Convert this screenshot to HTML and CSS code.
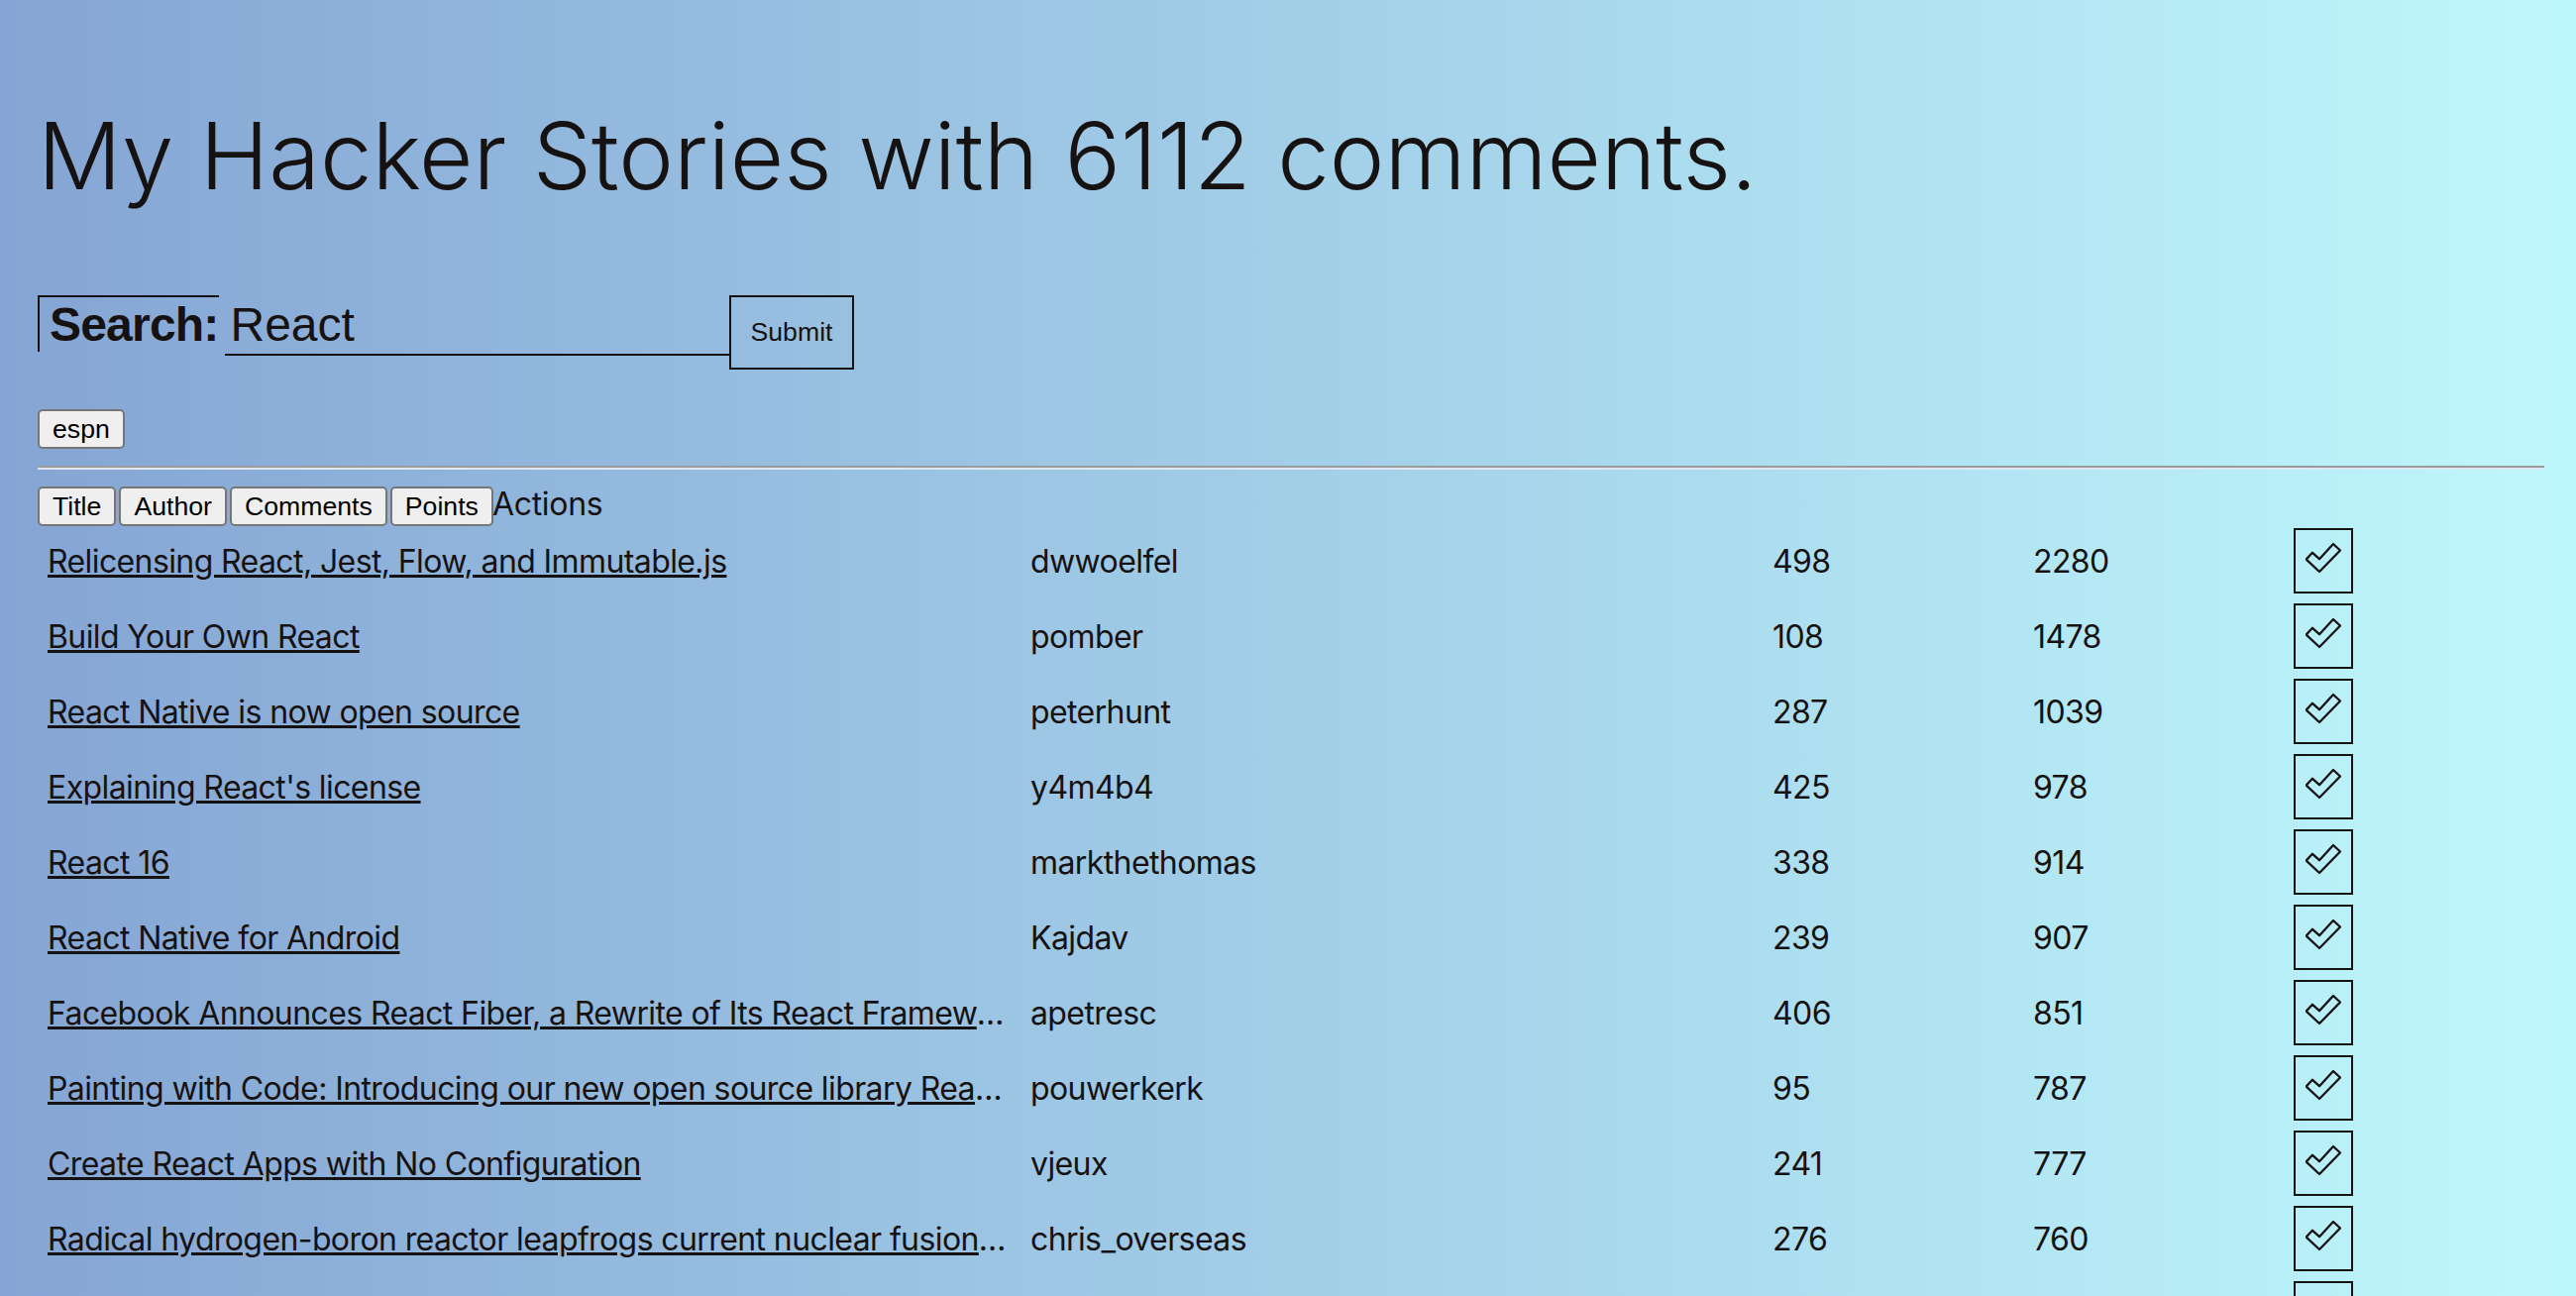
FILE: index.html
```html
<!DOCTYPE html>
<html lang="en">
<head>
<meta charset="utf-8">
<title>My Hacker Stories</title>
<link rel="stylesheet" href="styles.css">
</head>
<body>
<div class="container">
  <h1 class="headline-primary">My Hacker Stories with 6112 comments.</h1>

  <form class="search-form">
    <label class="label" for="search"><strong>Search:</strong></label>&nbsp;<input id="search" class="input" type="text" value="React"><button type="submit" class="button button-large">Submit</button>
  </form>

  <div class="last-searches">
    <button type="button" class="native-button">espn</button>
  </div>

  <hr class="divider">

  <div class="sort-header">
    <button type="button" class="native-button">Title</button>
    <button type="button" class="native-button">Author</button>
    <button type="button" class="native-button">Comments</button>
    <button type="button" class="native-button">Points</button>
    <span class="sort-label">Actions</span>
  </div>

  <ul class="list">
    <li class="item">
      <span class="col col-title"><a href="#">Relicensing React, Jest, Flow, and Immutable.js</a></span>
      <span class="col col-author">dwwoelfel</span>
      <span class="col col-num">498</span>
      <span class="col col-num">2280</span>
      <span class="col col-num"><button type="button" class="button button-small"><svg class="check" viewBox="0 0 36 36" width="36" height="36"><polygon points="0.7,19.5 7,12.8 14,19.2 28,4 35,10.5 14,32"/></svg></button></span>
    </li>
    <li class="item">
      <span class="col col-title"><a href="#">Build Your Own React</a></span>
      <span class="col col-author">pomber</span>
      <span class="col col-num">108</span>
      <span class="col col-num">1478</span>
      <span class="col col-num"><button type="button" class="button button-small"><svg class="check" viewBox="0 0 36 36" width="36" height="36"><polygon points="0.7,19.5 7,12.8 14,19.2 28,4 35,10.5 14,32"/></svg></button></span>
    </li>
    <li class="item">
      <span class="col col-title"><a href="#">React Native is now open source</a></span>
      <span class="col col-author">peterhunt</span>
      <span class="col col-num">287</span>
      <span class="col col-num">1039</span>
      <span class="col col-num"><button type="button" class="button button-small"><svg class="check" viewBox="0 0 36 36" width="36" height="36"><polygon points="0.7,19.5 7,12.8 14,19.2 28,4 35,10.5 14,32"/></svg></button></span>
    </li>
    <li class="item">
      <span class="col col-title"><a href="#">Explaining React's license</a></span>
      <span class="col col-author">y4m4b4</span>
      <span class="col col-num">425</span>
      <span class="col col-num">978</span>
      <span class="col col-num"><button type="button" class="button button-small"><svg class="check" viewBox="0 0 36 36" width="36" height="36"><polygon points="0.7,19.5 7,12.8 14,19.2 28,4 35,10.5 14,32"/></svg></button></span>
    </li>
    <li class="item">
      <span class="col col-title"><a href="#">React 16</a></span>
      <span class="col col-author">markthethomas</span>
      <span class="col col-num">338</span>
      <span class="col col-num">914</span>
      <span class="col col-num"><button type="button" class="button button-small"><svg class="check" viewBox="0 0 36 36" width="36" height="36"><polygon points="0.7,19.5 7,12.8 14,19.2 28,4 35,10.5 14,32"/></svg></button></span>
    </li>
    <li class="item">
      <span class="col col-title"><a href="#">React Native for Android</a></span>
      <span class="col col-author">Kajdav</span>
      <span class="col col-num">239</span>
      <span class="col col-num">907</span>
      <span class="col col-num"><button type="button" class="button button-small"><svg class="check" viewBox="0 0 36 36" width="36" height="36"><polygon points="0.7,19.5 7,12.8 14,19.2 28,4 35,10.5 14,32"/></svg></button></span>
    </li>
    <li class="item">
      <span class="col col-title"><a href="#">Facebook Announces React Fiber, a Rewrite of Its React Framework</a></span>
      <span class="col col-author">apetresc</span>
      <span class="col col-num">406</span>
      <span class="col col-num">851</span>
      <span class="col col-num"><button type="button" class="button button-small"><svg class="check" viewBox="0 0 36 36" width="36" height="36"><polygon points="0.7,19.5 7,12.8 14,19.2 28,4 35,10.5 14,32"/></svg></button></span>
    </li>
    <li class="item">
      <span class="col col-title"><a href="#">Painting with Code: Introducing our new open source library React Sketch.app</a></span>
      <span class="col col-author">pouwerkerk</span>
      <span class="col col-num">95</span>
      <span class="col col-num">787</span>
      <span class="col col-num"><button type="button" class="button button-small"><svg class="check" viewBox="0 0 36 36" width="36" height="36"><polygon points="0.7,19.5 7,12.8 14,19.2 28,4 35,10.5 14,32"/></svg></button></span>
    </li>
    <li class="item">
      <span class="col col-title"><a href="#">Create React Apps with No Configuration</a></span>
      <span class="col col-author">vjeux</span>
      <span class="col col-num">241</span>
      <span class="col col-num">777</span>
      <span class="col col-num"><button type="button" class="button button-small"><svg class="check" viewBox="0 0 36 36" width="36" height="36"><polygon points="0.7,19.5 7,12.8 14,19.2 28,4 35,10.5 14,32"/></svg></button></span>
    </li>
    <li class="item">
      <span class="col col-title"><a href="#">Radical hydrogen-boron reactor leapfrogs current nuclear fusion tech</a></span>
      <span class="col col-author">chris_overseas</span>
      <span class="col col-num">276</span>
      <span class="col col-num">760</span>
      <span class="col col-num"><button type="button" class="button button-small"><svg class="check" viewBox="0 0 36 36" width="36" height="36"><polygon points="0.7,19.5 7,12.8 14,19.2 28,4 35,10.5 14,32"/></svg></button></span>
    </li>
    <li class="item">
      <span class="col col-title"><a href="#">React Router v4</a></span>
      <span class="col col-author">mjackson</span>
      <span class="col col-num">253</span>
      <span class="col col-num">742</span>
      <span class="col col-num"><button type="button" class="button button-small"><svg class="check" viewBox="0 0 36 36" width="36" height="36"><polygon points="0.7,19.5 7,12.8 14,19.2 28,4 35,10.5 14,32"/></svg></button></span>
    </li>
  </ul>
</div>
</body>
</html>
```

FILE: styles.css
```css
html, body {
  margin: 0;
  padding: 0;
}

body {
  font-family: Inter, "Noto Sans", sans-serif;
  font-size: 32px;
  color: #171212;
}

.container {
  min-height: 100vh;
  padding: 40px 32px 40px 38px;
  background: #85a5d4;
  background: linear-gradient(to left, #bff8fc, #85a5d4);
  color: #171212;
  box-sizing: border-box;
}

.headline-primary {
  font-family: Inter, "Noto Sans", sans-serif;
  font-size: 94px;
  line-height: 116px;
  font-weight: 300;
  letter-spacing: 0;
  margin: 59px 0 63px;
}

.search-form {
  display: flex;
  align-items: baseline;
  padding: 20px 0 40px;
  margin: 0;
}

.label {
  border-top: 2px solid #171212;
  border-left: 2px solid #171212;
  padding-left: 10px;
  font-family: "Liberation Sans", Arial, sans-serif;
  font-size: 48px;
  letter-spacing: -0.8px;
}

.input {
  border: none;
  border-bottom: 2px solid #171212;
  background-color: transparent;
  font-family: "Liberation Sans", Arial, sans-serif;
  font-size: 48px;
  color: #171212;
  padding: 2px 6px;
  margin: 0 0 0 -3px;
  width: 509px;
  box-sizing: border-box;
  outline: none;
}

.button {
  background: transparent;
  border: 2px solid #171212;
  color: #171212;
  font-family: "Liberation Sans", Arial, sans-serif;
  font-size: 26.67px;
  line-height: normal;
  margin: 0;
  cursor: pointer;
}

.button-large {
  padding: 20px;
}

.button-small {
  padding: 10px 10px 16px;
  display: block;
}

.check {
  display: block;
}

.check polygon {
  fill: none;
  stroke: #171212;
  stroke-width: 2.3;
  stroke-linejoin: round;
}

.last-searches {
  display: flex;
}

.native-button {
  font-family: "Liberation Sans", Arial, sans-serif;
  font-size: 26.67px;
  line-height: 30px;
  padding: 3px 13px;
  margin: 0;
  background: #efefef;
  color: #000;
  border: 2px solid #767676;
  border-radius: 5px;
}

.divider {
  height: 0;
  margin: 17px 0 15px;
  border: none;
  border-top: 2px solid #9b9b9b;
  border-bottom: 2px solid #dfe8f2;
}

.sort-header {
  display: flex;
  align-items: baseline;
  gap: 3px;
  margin-bottom: 2px;
}

.sort-label {
  font-size: 32px;
  letter-spacing: -0.3px;
  margin-left: -4px;
}

.list {
  list-style: none;
  margin: 0;
  padding: 0;
}

.item {
  display: flex;
  align-items: center;
  padding-bottom: 10px;
}

.col {
  padding: 0 10px;
  white-space: nowrap;
  overflow: hidden;
  text-overflow: ellipsis;
  letter-spacing: -0.6px;
}

.col a {
  color: inherit;
}

.col-title {
  width: 40%;
}

.col-author {
  width: 30%;
}

.col-num {
  width: 10%;
}
```
